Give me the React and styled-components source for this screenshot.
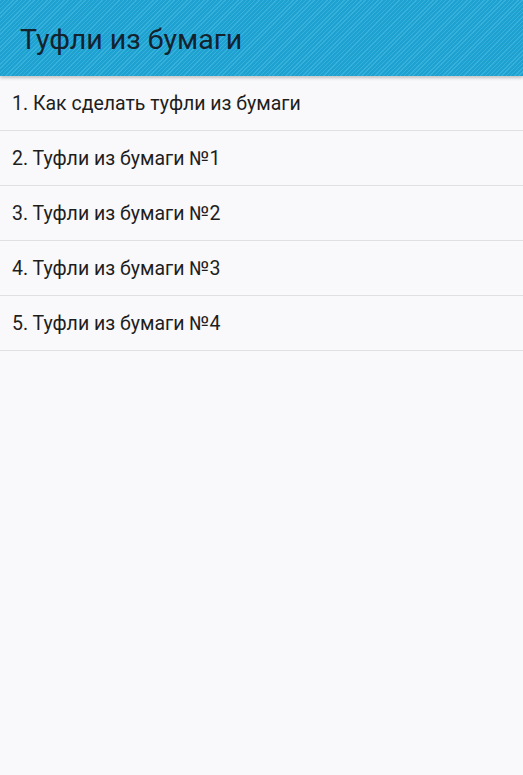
import styled, { createGlobalStyle } from "styled-components";

const GlobalStyle = createGlobalStyle`
  html, body { margin: 0; padding: 0; }
  body {
    background: #f9f9fb;
    font-family: Roboto, "Noto Sans", sans-serif;
  }
`;

const Screen = styled.div`
  width: 523px;
  height: 775px;
  background: #f9f9fb;
  overflow: hidden;
`;

const Toolbar = styled.header`
  height: 76px;
  box-sizing: border-box;
  display: flex;
  align-items: center;
  padding: 2px 20px 0;
  background-color: #1fa8d8;
  background-image: repeating-linear-gradient(
    135deg,
    rgba(255, 255, 255, 0.1) 0px,
    rgba(255, 255, 255, 0.1) 1px,
    rgba(0, 0, 0, 0.04) 1px,
    rgba(0, 0, 0, 0.04) 3px
  );
  box-shadow: 0 2px 3px rgba(0, 0, 0, 0.22);
  position: relative;
`;

const Title = styled.h1`
  margin: 0;
  font-size: 28.5px;
  font-weight: 400;
  color: #14222e;
`;

const List = styled.ul`
  list-style: none;
  margin: 0;
  padding: 0;
`;

const Row = styled.li`
  height: 54px;
  display: flex;
  align-items: center;
  padding: 1px 12px 0;
  box-sizing: content-box;
  height: 53px;
  border-bottom: 1px solid #e0e0e2;
  font-size: 19.5px;
  color: #1e1e1e;
`;

const items = [
  "1. Как сделать туфли из бумаги",
  "2. Туфли из бумаги №1",
  "3. Туфли из бумаги №2",
  "4. Туфли из бумаги №3",
  "5. Туфли из бумаги №4",
];

export default function App() {
  return (
    <>
      <GlobalStyle />
      <Screen>
        <Toolbar>
          <Title>Туфли из бумаги</Title>
        </Toolbar>
        <List>
          {items.map((t) => (
            <Row key={t}>{t}</Row>
          ))}
        </List>
      </Screen>
    </>
  );
}
